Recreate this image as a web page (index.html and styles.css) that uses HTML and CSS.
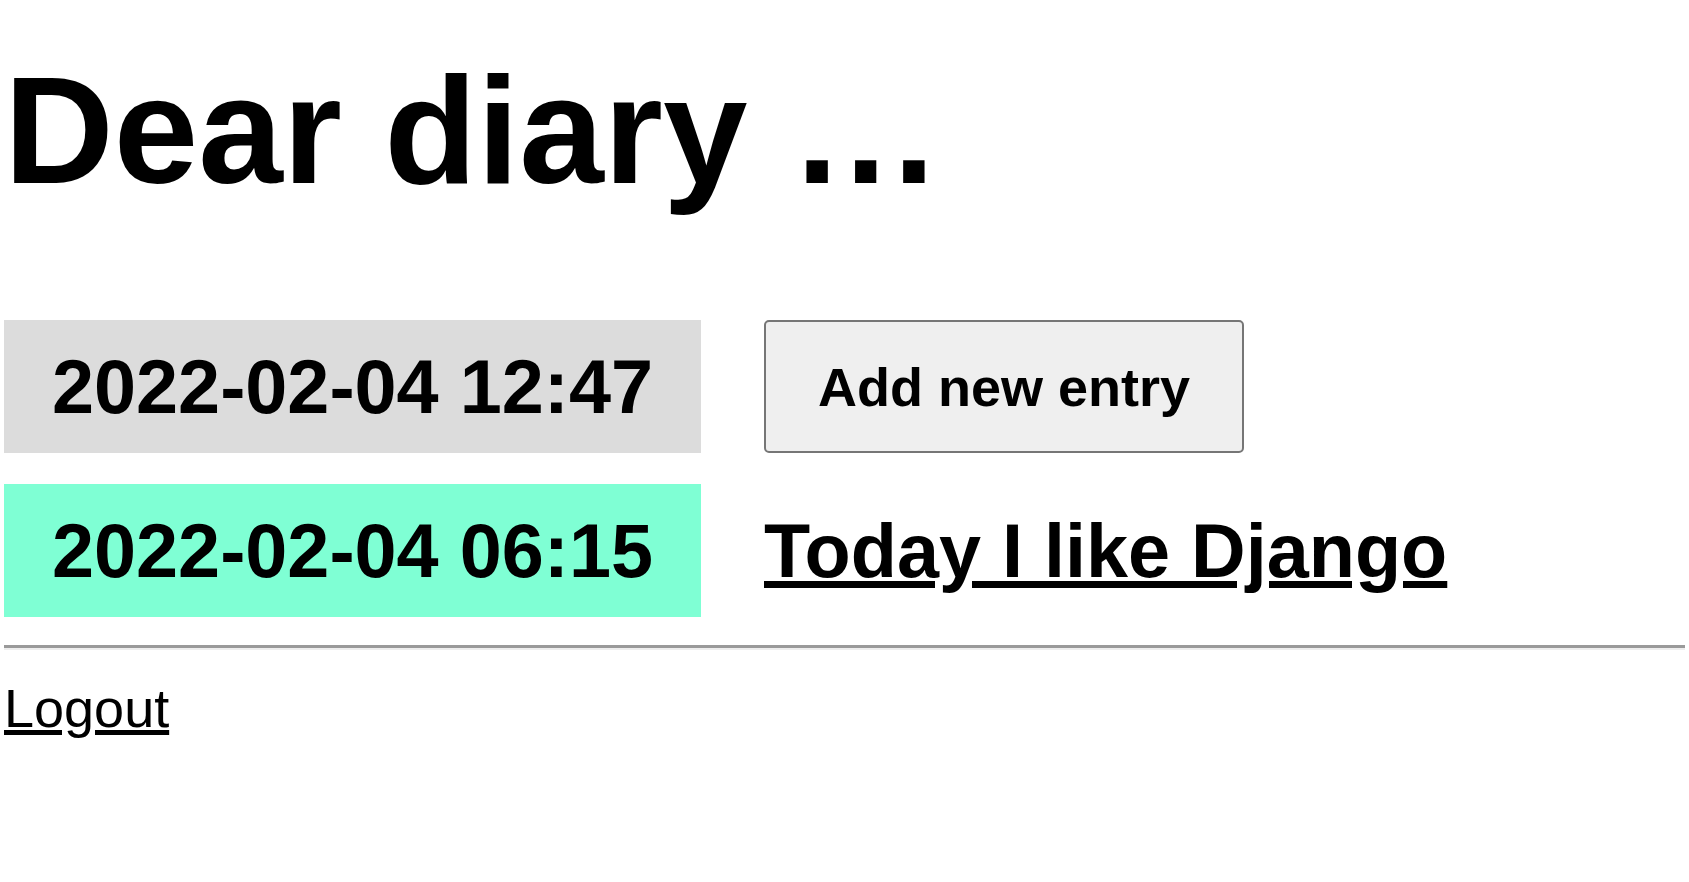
FILE: index.html
```html
<!DOCTYPE html>
<html lang="en">
<head>
<meta charset="utf-8">
<title>Dear diary</title>
<link rel="stylesheet" href="styles.css">
</head>
<body>
<h1 class="title">Dear diary …</h1>
<div class="entries">
  <div class="stamp stamp-now">2022-02-04 12:47</div>
  <div class="cell"><button class="add-btn" type="button">Add new entry</button></div>
  <div class="stamp stamp-entry">2022-02-04 06:15</div>
  <div class="cell"><a class="entry-link" href="#">Today I like Django</a></div>
</div>
<hr class="rule">
<a class="logout" href="#">Logout</a>
</body>
</html>
```
FILE: styles.css
```css
html, body {
  margin: 0;
  padding: 0;
  background: #ffffff;
}
body {
  padding: 0 4px;
  font-family: "Liberation Sans", Arial, sans-serif;
  color: #000;
}
.title {
  margin: 44px 0 0 0;
  font-size: 152px;
  line-height: 172px;
  font-weight: bold;
}
.entries {
  margin-top: 104px;
  display: grid;
  grid-template-columns: 697px auto;
  column-gap: 63px;
  row-gap: 31px;
  justify-content: start;
}
.stamp {
  height: 133px;
  display: flex;
  align-items: center;
  justify-content: center;
  font-size: 75.6px;
  font-weight: bold;
}
.stamp-now { background: #dcdcdc; }
.stamp-entry { background: #7fffd4; }
.cell {
  display: flex;
  align-items: center;
}
.add-btn {
  height: 133px;
  width: 480px;
  padding: 0;
  font-family: "Liberation Sans", Arial, sans-serif;
  font-size: 54px;
  font-weight: bold;
  color: #000;
  background: #efefef;
  border: 2px solid #767676;
  border-radius: 5px;
}
.entry-link {
  font-size: 75.6px;
  font-weight: bold;
  color: #000;
  line-height: 86px;
}
.rule {
  margin: 28px 0 0 0;
  border: 0;
  border-top: 3px solid #9a9a9a;
  border-bottom: 2px solid #eeeeee;
  height: 0;
}
.logout {
  display: inline-block;
  margin-top: 27px;
  font-size: 54px;
  line-height: 62px;
  color: #000;
}
```
